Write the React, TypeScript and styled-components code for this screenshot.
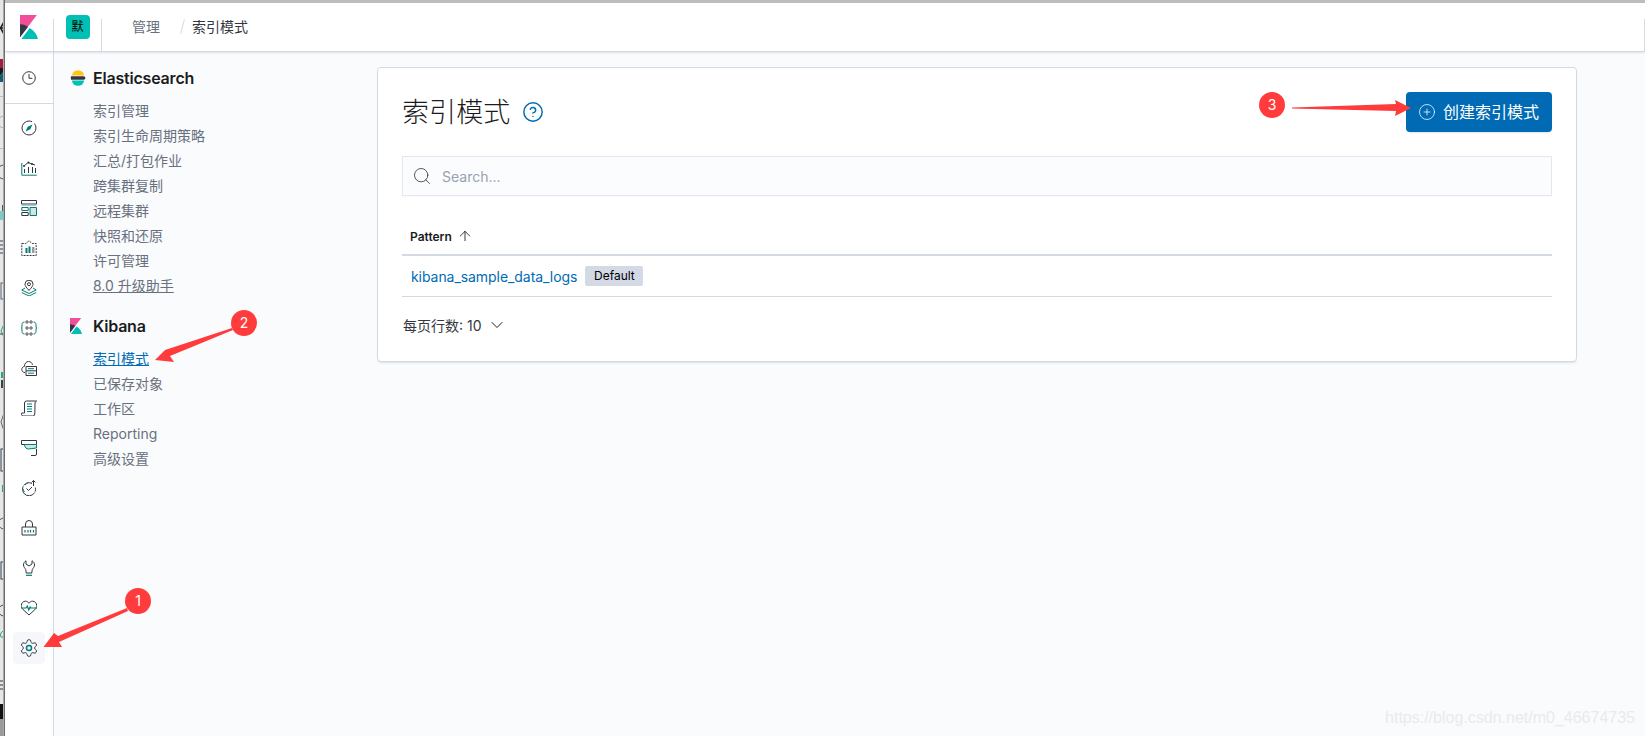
import React from 'react'
import styled, { createGlobalStyle } from 'styled-components'
import { ArrowUp, ChevronDown, CircleHelp, CirclePlus, Search } from 'lucide-react'

const DARK = '#343741'
const TEAL = '#017d73'

const GlobalStyle = createGlobalStyle`
  html, body {
    margin: 0;
    padding: 0;
    background: #fafbfd;
  }
  body {
    font-family: Inter, "Noto Sans CJK SC", "Liberation Sans", sans-serif;
    font-size: 14px;
    color: #343741;
    overflow: hidden;
  }
`

const KibanaLogo: React.FC<{ width: number; height: number }> = ({ width, height }) => (
  <svg width={width} height={height} viewBox="4 0 26.7 31" preserveAspectRatio="none">
    <path fill="#f04e98" d="M4 0v28.789L28.935.017z" />
    <path fill="#343741" d="M4 12v16.789l11.906-13.738A24.721 24.721 0 004 12" />
    <path fill="#00bfb3" d="M18.479 16.664L6.268 30.754l-.22.246h24.61c-1.348-5.727-5.472-10.914-12.179-14.336" />
  </svg>
)

const ElasticLogo = () => (
  <svg width="16" height="16" viewBox="0 0 16 16">
    <path fill="#fec514" d="M2 5.500a6 5.200 0 0 1 12 0z" />
    <path fill="#343741" d="M1 6.200h12.600a1.800 1.800 0 0 1 0 3.600H1a7 7 0 0 1 0-3.600z" />
    <path fill="#00bfb3" d="M2 10.600a6 5.200 0 0 0 12 0z" />
  </svg>
)

// the side nav app icons, two tone like the EUI logos
const icons: Record<string, React.ReactNode> = {
  clock: (
    <g stroke={DARK}>
      <circle cx="8" cy="8" r="6.3" />
      <path d="M8 4v4.3h3.4" />
    </g>
  ),
  discover: (
    <g>
      <circle cx="8" cy="8" r="7" stroke={DARK} strokeDasharray="36 3" />
      <path d="M11.5 4.5L9.3 9.3 4.5 11.5l2.2-4.8z" fill={TEAL} />
    </g>
  ),
  visualize: (
    <g>
      <path d="M.8 3v12.2h15" stroke={TEAL} />
      <path d="M3 6l4-3.5 4 1.5 3 1" stroke={DARK} />
      <circle cx="3" cy="6" r="1" fill={DARK} />
      <circle cx="7.5" cy="2.5" r="1" fill={DARK} />
      <circle cx="11" cy="4" r="1" fill={DARK} />
      <path d="M3.5 9v4M7.5 7v6M11.5 7v6M14.5 8v5" stroke={DARK} />
    </g>
  ),
  dashboard: (
    <g>
      <path d="M.5.5h15v3.5H.5z" stroke={DARK} />
      <path d="M.5 4h15v1.6H.5z" fill="#98a2b3" />
      <path d="M.8 7.5h6.4v3H.8z" stroke={TEAL} />
      <path d="M9 7.5h6.5v8H9z" stroke={TEAL} fill="#cfe7e4" />
      <path d="M.8 12.5h6.4v3H.8z" stroke={DARK} />
    </g>
  ),
  canvas: (
    <g>
      <path d="M.8 3.5h4L8 .8l3.2 2.7h4v12H.8z" stroke={DARK} strokeDasharray="2 1" />
      <path d="M4.5 8h2v5h-2zM7.5 6.5h2V13h-2z" fill={TEAL} />
      <path d="M11 8h2.5M11 10h2.5M11 12h2.5" stroke={DARK} />
    </g>
  ),
  maps: (
    <g>
      <path d="M8 10.5C5.5 7.5 4 6 4 4.2a4 4 0 0 1 8 0C12 6 10.5 7.5 8 10.5z" stroke={DARK} />
      <circle cx="8" cy="4.2" r="1.5" stroke={DARK} />
      <path d="M4 8L.8 10 8 13.5 15.2 10 12 8M.8 12.5L8 16l7.2-3.5" stroke={TEAL} />
    </g>
  ),
  ml: (
    <g>
      <path d="M3.5 2C1 2 1 4 1 6v1l-.5 1 .5 1v1c0 2 0 4 2.5 4M12.5 2c2.5 0 2.5 2 2.500 4v1l.5 1-.5 1v1c0 2 0 4-2.500 4" stroke={TEAL} />
      {[2, 8, 14].map((y) =>
        [6, 10].map((x) => <circle key={`${x}-${y}`} cx={x} cy={y} r="1.2" stroke={DARK} strokeWidth="0.9" />),
      )}
    </g>
  ),
  infra: (
    <g stroke={DARK}>
      <path d="M4 12.500C1.800 12.500.8 11 .8 9.500c0-1.600 1-2.800 2.500-3C3.500 3.500 5.300 1.500 7.500 1.500c2 0 3.500 1.300 4 3.300" />
      <path d="M5 6.500h10.500v9H5z" fill="#fff" />
      <path d="M5 10.800h10.500" />
      <path d="M7 8.700h6" stroke={TEAL} />
      <path d="M7 13.200h6" stroke={TEAL} />
    </g>
  ),
  logs: (
    <g>
      <path d="M3.500 13V3A2 2 0 0 1 5.500 1h10c-1 .5-1.500 1.500-1.500 3l-.2 10a2 2 0 0 1-2 2H2a2 2 0 0 1-1.300-3z" stroke={DARK} />
      <path d="M6 4h5M6 6.500h5M6 9h5M6 11.500h5" stroke={TEAL} />
    </g>
  ),
  apm: (
    <g>
      <path d="M.5.5h15v4H.5z" stroke={DARK} />
      <path d="M3.500 4.500h12v3.500l-8 1c-2 0-4-1.500-4-4.500z" stroke={TEAL} fill="#cfe7e4" />
      <path d="M10 15.500h4a1.500 1.500 0 0 0 1.500-1.500v-5" stroke={DARK} />
    </g>
  ),
  uptime: (
    <g>
      <path d="M11 3.500a6.500 6.500 0 1 0 3.300 4" stroke={DARK} strokeDasharray="9 1 20 1" />
      <path d="M4 5a6 6 0 0 1 3-2M2 9a6 6 0 0 0 1.500 3" stroke={TEAL} />
      <path d="M5.500 8.500l2 2L11 7" stroke={DARK} />
      <path d="M12.500 6V.5M10.700 2.300L12.500.5l1.800 1.800" stroke={DARK} />
    </g>
  ),
  security: (
    <g>
      <path d="M4.500 7V4a3.500 3.500 0 0 1 7 0v3" stroke={DARK} />
      <path d="M1 7h14v8H1z" stroke={DARK} strokeLinejoin="round" />
      <path d="M4 10v2.500M7 10v2.500M9.500 10v2.500M12.500 10v2.500" stroke={TEAL} strokeWidth="1.2" />
    </g>
  ),
  devtools: (
    <g>
      <path d="M5 .8C3.300 1.800 2.500 3.200 2.500 5c0 2 1.500 3 2.200 4.500.4 1 .4 2.500.4 3.500h5.800c0-1 0-2.500.4-3.500C12 8 13.500 7 13.500 5c0-1.800-.8-3.200-2.500-4.200V4L8 6 5 4z" stroke={DARK} />
      <path d="M5 15.300h6" stroke={TEAL} strokeWidth="1.200" />
    </g>
  ),
  monitoring: (
    <g>
      <path d="M8 15L2 9.500C.6 8 .3 6.800.3 5.500.3 3 2.200 1.200 4.300 1.200 6 1.200 7.300 2 8 3.300 8.700 2 10 1.200 11.700 1.200c2.100 0 4 1.800 4 4.300 0 1.300-.3 2.500-1.700 4z" stroke={DARK} />
      <path d="M0 8h5l1.300-2 1.500 4 1.400-3 .8 1H16" stroke={TEAL} fill="#fff" strokeWidth="1.200" />
    </g>
  ),
}

const NavIcon: React.FC<{ name: string }> = ({ name }) => (
  <svg width="16" height="16" viewBox="0 0 16 16" fill="none" strokeWidth="1">
    {icons[name]}
  </svg>
)

const GearIcon = () => (
  <svg width="20" height="20" viewBox="0 0 24 24" fill="none" stroke={DARK} strokeWidth="1.200">
    <path d="M12.220 2h-.44a2 2 0 0 0-2 2v.18a2 2 0 0 1-1 1.730l-.43.250a2 2 0 0 1-2 0l-.15-.08a2 2 0 0 0-2.730.730l-.22.380a2 2 0 0 0 .730 2.730l.15.100a2 2 0 0 1 1 1.720v.510a2 2 0 0 1-1 1.740l-.15.090a2 2 0 0 0-.730 2.730l.22.380a2 2 0 0 0 2.730.730l.15-.08a2 2 0 0 1 2 0l.43.250a2 2 0 0 1 1 1.730V20a2 2 0 0 0 2 2h.44a2 2 0 0 0 2-2v-.18a2 2 0 0 1 1-1.730l.43-.25a2 2 0 0 1 2 0l.15.08a2 2 0 0 0 2.730-.730l.22-.39a2 2 0 0 0-.730-2.730l-.15-.08a2 2 0 0 1-1-1.740v-.5a2 2 0 0 1 1-1.740l.15-.09a2 2 0 0 0 .730-2.730l-.22-.38a2 2 0 0 0-2.730-.730l-.15.08a2 2 0 0 1-2 0l-.43-.25a2 2 0 0 1-1-1.730V4a2 2 0 0 0-2-2z" />
    <circle cx="12" cy="12" r="3" stroke={TEAL} strokeWidth="1.800" />
  </svg>
)

const navApps = ['discover', 'visualize', 'dashboard', 'canvas', 'maps', 'ml', 'infra', 'logs', 'apm', 'uptime', 'security', 'devtools', 'monitoring']

const sections = [
  {
    title: 'Elasticsearch',
    logo: <ElasticLogo />,
    links: ['索引管理', '索引生命周期策略', '汇总/打包作业', '跨集群复制', '远程集群', '快照和还原', '许可管理', '8.0 升级助手'],
  },
  {
    title: 'Kibana',
    logo: <KibanaLogo width={12} height={16} />,
    links: ['索引模式', '已保存对象', '工作区', 'Reporting', '高级设置'],
  },
]

// a browser window peeks out behind the screenshot on the left edge
const WindowBehind = () => (
  <svg width="5" height="736" viewBox="0 0 5 736">
    <rect width="5" height="736" fill="#e6e6e6" />
    <path d="M4 22l-3.500 6 3.500 6M1 28h3" stroke="#222" strokeWidth="1.500" fill="none" />
    <rect y="59" width="4" height="9" fill="#a51d3c" />
    <path d="M0 68h4v3l-4 5z" fill="#1a1a1f" />
    <path d="M0 76l4-5v11H0z" fill="#0f5d73" />
    <rect y="96" width="4" height="1" fill="#bdbdbd" />
    <path d="M4 116a6 6 0 0 0 0 12" stroke="#aaa" fill="none" />
    <rect y="148" width="4" height="1" fill="#bdbdbd" />
    <path d="M4 165a7 7 0 0 0 0 14" stroke="#444" fill="none" />
    <rect x="2" y="205" width="2" height="6" fill="#555" />
    <rect y="211" width="4" height="9" fill="#7cc" />
    <path d="M0 241h4M0 245h4M0 249h4M0 253h4" stroke="#345" />
    <rect x="1" y="283" width="3" height="16" fill="none" stroke="#567" />
    <path d="M4 324l-3 7 3 6" stroke="#2a7" fill="none" />
    <path d="M0 334h4" stroke="#345" />
    <rect x="1" y="372" width="3" height="6" fill="#2a7" />
    <rect x="1" y="380" width="3" height="8" fill="#345" />
    <path d="M4 413l-3 9 3 9" stroke="#667" fill="none" />
    <rect x="1" y="449" width="3" height="22" fill="none" stroke="#345" />
    <rect x="2" y="485" width="2" height="7" fill="#2a7" />
    <path d="M4 518a5 5 0 0 0 0 11" stroke="#555" fill="none" />
    <rect x="1" y="562" width="3" height="17" fill="none" stroke="#345" />
    <path d="M4 605a5 5 0 0 0 0 11" stroke="#444" fill="none" />
    <path d="M4 631a4 4 0 0 0-3 6h3" stroke="#2a7" fill="none" />
    <path d="M0 681h4M0 685h4M0 689h4" stroke="#333" />
    <rect y="704" width="4" height="15" fill="#111" />
    <rect y="719" width="4" height="17" fill="#9a9a9a" />
    <rect x="3" width="1" height="736" fill="#a8a8a8" />
    <rect x="4" width="1" height="736" fill="#6b6b6b" />
  </svg>
)

const App: React.FC = () => (
  <Page>
    <GlobalStyle />
    <TopEdge />
    <Window>
      <WindowBehind />
      <Shell>
        <Header>
          <LogoCell>
            <KibanaLogo width={18} height={24} />
          </LogoCell>
          <HeaderDivider />
          <SpaceCell>
            <SpaceBadge>默</SpaceBadge>
          </SpaceCell>
          <HeaderDivider />
          <Breadcrumbs>
            <Crumb>管理</Crumb>
            <CrumbSlash />
            <Crumb $current>索引模式</Crumb>
          </Breadcrumbs>
          <HeaderDivider />
        </Header>
        <Body>
          <Nav>
            <RecentBlock>
              <NavIcon name="clock" />
            </RecentBlock>
            <NavList>
              {navApps.map((name) => (
                <NavRow key={name}>
                  <NavIcon name={name} />
                </NavRow>
              ))}
              <NavRow>
                <ActiveNavTile>
                  <GearIcon />
                </ActiveNavTile>
              </NavRow>
            </NavList>
          </Nav>
          <Sidebar>
            {sections.map((section) => (
              <Section key={section.title}>
                <SectionTitle>
                  <SectionLogo>{section.logo}</SectionLogo>
                  {section.title}
                </SectionTitle>
                {section.links.map((link) => (
                  <SideLink key={link} $active={link === '索引模式'} $underline={link === '8.0 升级助手'}>
                    {link}
                  </SideLink>
                ))}
              </Section>
            ))}
          </Sidebar>
          <Content>
            <Card>
              <CardHead>
                <TitleGroup>
                  <Title>索引模式</Title>
                  <CircleHelp size={22} color="#006bb4" strokeWidth={1.6} />
                </TitleGroup>
                <CreateButton>
                  <CirclePlus size={18} strokeWidth={1} />
                  <ButtonLabel>创建索引模式</ButtonLabel>
                </CreateButton>
              </CardHead>
              <SearchBox>
                <Search size={20} color="#343741" strokeWidth={1} />
                <SearchHint>Search...</SearchHint>
              </SearchBox>
              <TableHead>
                Pattern
                <ArrowUp size={16} color="#1a1c21" strokeWidth={1.300} />
              </TableHead>
              <TableRow>
                <PatternLink>kibana_sample_data_logs</PatternLink>
                <DefaultBadge>Default</DefaultBadge>
              </TableRow>
              <RowsPerPage>
                每页行数: 10
                <ChevronDown size={20} color="#1a1c21" strokeWidth={1.200} />
              </RowsPerPage>
            </Card>
          </Content>
        </Body>
      </Shell>
    </Window>

    <ArrowLayer width="1645" height="736" viewBox="0 0 1645 736">
      <path d="M127 608L58 636 54 633 43.500 647 62 647 59 642 128 611z" fill="#ff3b3b" />
      <path d="M232 328L165 350 168 347 155 360 174 362 170 356 233 330z" fill="#ff3b3b" />
      <path d="M1292 107.500L1396 104 1395 100 1411 108 1395 116 1396 111 1292 108.500z" fill="#ff3b3b" />
    </ArrowLayer>
    <StepMark $x={138} $y={601}>1</StepMark>
    <StepMark $x={244} $y={323}>2</StepMark>
    <StepMark $x={1272} $y={105}>3</StepMark>
    <Watermark>https://blog.csdn.net/m0_46674735</Watermark>
  </Page>
)

export default App

const Page = styled.div`
  position: relative;
  width: 1645px;
  height: 736px;
  overflow: hidden;
  display: flex;
  flex-direction: column;
`
const TopEdge = styled.div`
  height: 3px;
  flex: none;
  background: #bdbdbd;
`
const Window = styled.div`
  flex: 1;
  min-height: 0;
  display: flex;

  > svg:first-child {
    flex: none;
    margin-top: -3px;
  }
`
const Shell = styled.div`
  flex: 1;
  min-width: 0;
  display: flex;
  flex-direction: column;
`
const Header = styled.header`
  flex: none;
  position: relative;
  z-index: 1;
  height: 48px;
  background: #fff;
  border-bottom: 1px solid #d3dae6;
  box-shadow: 0 2px 2px -1px rgba(152, 162, 179, 0.3);
  display: flex;
  align-items: center;
`
const LogoCell = styled.div`
  width: 48px;
  display: flex;
  justify-content: center;
`
const HeaderDivider = styled.div`
  flex: none;
  align-self: flex-end;
  width: 1px;
  height: 32px;
  background: #d3dae6;
`
const SpaceCell = styled.div`
  width: 47px;
  display: flex;
  justify-content: center;
`
const SpaceBadge = styled.div`
  width: 24px;
  height: 24px;
  border-radius: 4px;
  background: #00bfb3;
  color: #000;
  font-size: 12px;
  line-height: 23px;
  text-align: center;
`
const Breadcrumbs = styled.nav`
  flex: 1;
  padding: 0 0 2px 30px;
  display: flex;
  align-items: center;
`
const Crumb = styled.span<{ $current?: boolean }>`
  font-size: 14px;
  color: ${(p) => (p.$current ? '#343741' : '#69707d')};
`
const CrumbSlash = styled.span`
  width: 1px;
  height: 15px;
  margin: 0 9px 0 22px;
  background: #d3dae6;
  transform: rotate(15deg);
`
const Body = styled.div`
  flex: 1;
  min-height: 0;
  display: flex;
`
const Nav = styled.nav`
  flex: none;
  width: 48px;
  background: #fff;
  border-right: 1px solid #d3dae6;
`
const RecentBlock = styled.div`
  height: 51px;
  border-bottom: 1px solid #d3dae6;
  display: flex;
  align-items: center;
  justify-content: center;
`
const NavList = styled.div`
  padding-top: 4px;
`
const NavRow = styled.div`
  height: 40px;
  display: flex;
  align-items: center;
  justify-content: center;
`
const ActiveNavTile = styled.div`
  width: 32px;
  height: 32px;
  border-radius: 4px;
  background: #f5f7fa;
  display: flex;
  align-items: center;
  justify-content: center;
`
const Sidebar = styled.aside`
  flex: none;
  width: 323px;
  box-sizing: border-box;
  padding: 14px 0 0 16px;
`
const Section = styled.section`
  margin-bottom: 16px;
`
const SectionTitle = styled.h2`
  margin: 0 0 8px;
  height: 24px;
  display: flex;
  align-items: center;
  font-size: 16px;
  line-height: 24px;
  font-weight: 600;
  letter-spacing: -0.2px;
  color: #1a1c21;
`
const SectionLogo = styled.span`
  width: 23px;
  flex: none;
  display: flex;
`
const SideLink = styled.div<{ $active?: boolean; $underline?: boolean }>`
  padding-left: 23px;
  line-height: 25px;
  font-size: 14px;
  color: ${(p) => (p.$active ? '#006bb4' : '#69707d')};
  text-decoration: ${(p) => (p.$active || p.$underline ? 'underline' : 'none')};
`
const Content = styled.main`
  flex: 1;
  min-width: 0;
  padding-top: 15px;
`
const Card = styled.section`
  box-sizing: border-box;
  width: 1200px;
  height: 295px;
  padding: 24px;
  background: #fff;
  border: 1px solid #d3dae6;
  border-radius: 4px;
  box-shadow: 0 2px 2px -1px rgba(152, 162, 179, 0.3);
`
const CardHead = styled.div`
  height: 40px;
  display: flex;
  align-items: center;
  justify-content: space-between;
`
const TitleGroup = styled.div`
  display: flex;
  align-items: center;
  gap: 12px;
`
const Title = styled.h1`
  margin: 0;
  padding-top: 1px;
  font-size: 27px;
  line-height: 40px;
  font-weight: 300;
  letter-spacing: 0.1px;
  color: #1a1c21;
`
const CreateButton = styled.button`
  box-sizing: border-box;
  width: 146px;
  height: 40px;
  padding: 0 0 0 12px;
  border: 0;
  border-radius: 4px;
  background: #006bb4;
  color: #fff;
  font-family: inherit;
  font-size: 16px;
  display: flex;
  align-items: center;
  gap: 7px;
  box-shadow: 0 2px 2px -1px rgba(152, 162, 179, 0.3);
`
const ButtonLabel = styled.span`
  padding-bottom: 2px;
`
const SearchBox = styled.div`
  box-sizing: border-box;
  height: 40px;
  margin-top: 24px;
  padding-left: 9px;
  background: #fbfcfd;
  border: 1px solid #e4e7ee;
  box-shadow: 0 1px 1px -1px rgba(152, 162, 179, 0.3);
  display: flex;
  align-items: center;
  gap: 10px;
`
const SearchHint = styled.span`
  font-size: 14px;
  color: #98a2b3;
`
const TableHead = styled.div`
  box-sizing: border-box;
  height: 44px;
  margin-top: 16px;
  padding: 6px 0 0 8px;
  border-bottom: 2px solid #d3dae6;
  font-size: 12px;
  font-weight: 600;
  color: #1a1c21;
  display: flex;
  align-items: center;
  gap: 5px;
`
const TableRow = styled.div`
  box-sizing: border-box;
  height: 41px;
  padding-left: 9px;
  border-bottom: 1px solid #d3dae6;
  display: flex;
  align-items: center;
  gap: 8px;
`
const PatternLink = styled.span`
  font-size: 14px;
  letter-spacing: -0.06px;
  color: #006bb4;
`
const DefaultBadge = styled.span`
  width: 58px;
  height: 20px;
  border-radius: 2px;
  background: #d3dae6;
  color: #000;
  font-size: 12px;
  line-height: 20px;
  text-align: center;
`
const RowsPerPage = styled.div`
  margin-top: 18px;
  padding-left: 1px;
  height: 20px;
  font-size: 14px;
  color: #343741;
  display: flex;
  align-items: center;
  gap: 5px;
`
const ArrowLayer = styled.svg`
  position: absolute;
  inset: 0;
  pointer-events: none;
`
const StepMark = styled.div<{ $x: number; $y: number }>`
  position: absolute;
  left: ${(p) => p.$x - 13}px;
  top: ${(p) => p.$y - 13}px;
  width: 26px;
  height: 26px;
  border-radius: 50%;
  background: #ff3b3b;
  color: #fff;
  font-size: 14px;
  line-height: 25px;
  text-align: center;
`
const Watermark = styled.div`
  position: absolute;
  right: 10px;
  bottom: 9px;
  font-family: "Liberation Sans", sans-serif;
  font-size: 16px;
  color: #e9eaee;
`
